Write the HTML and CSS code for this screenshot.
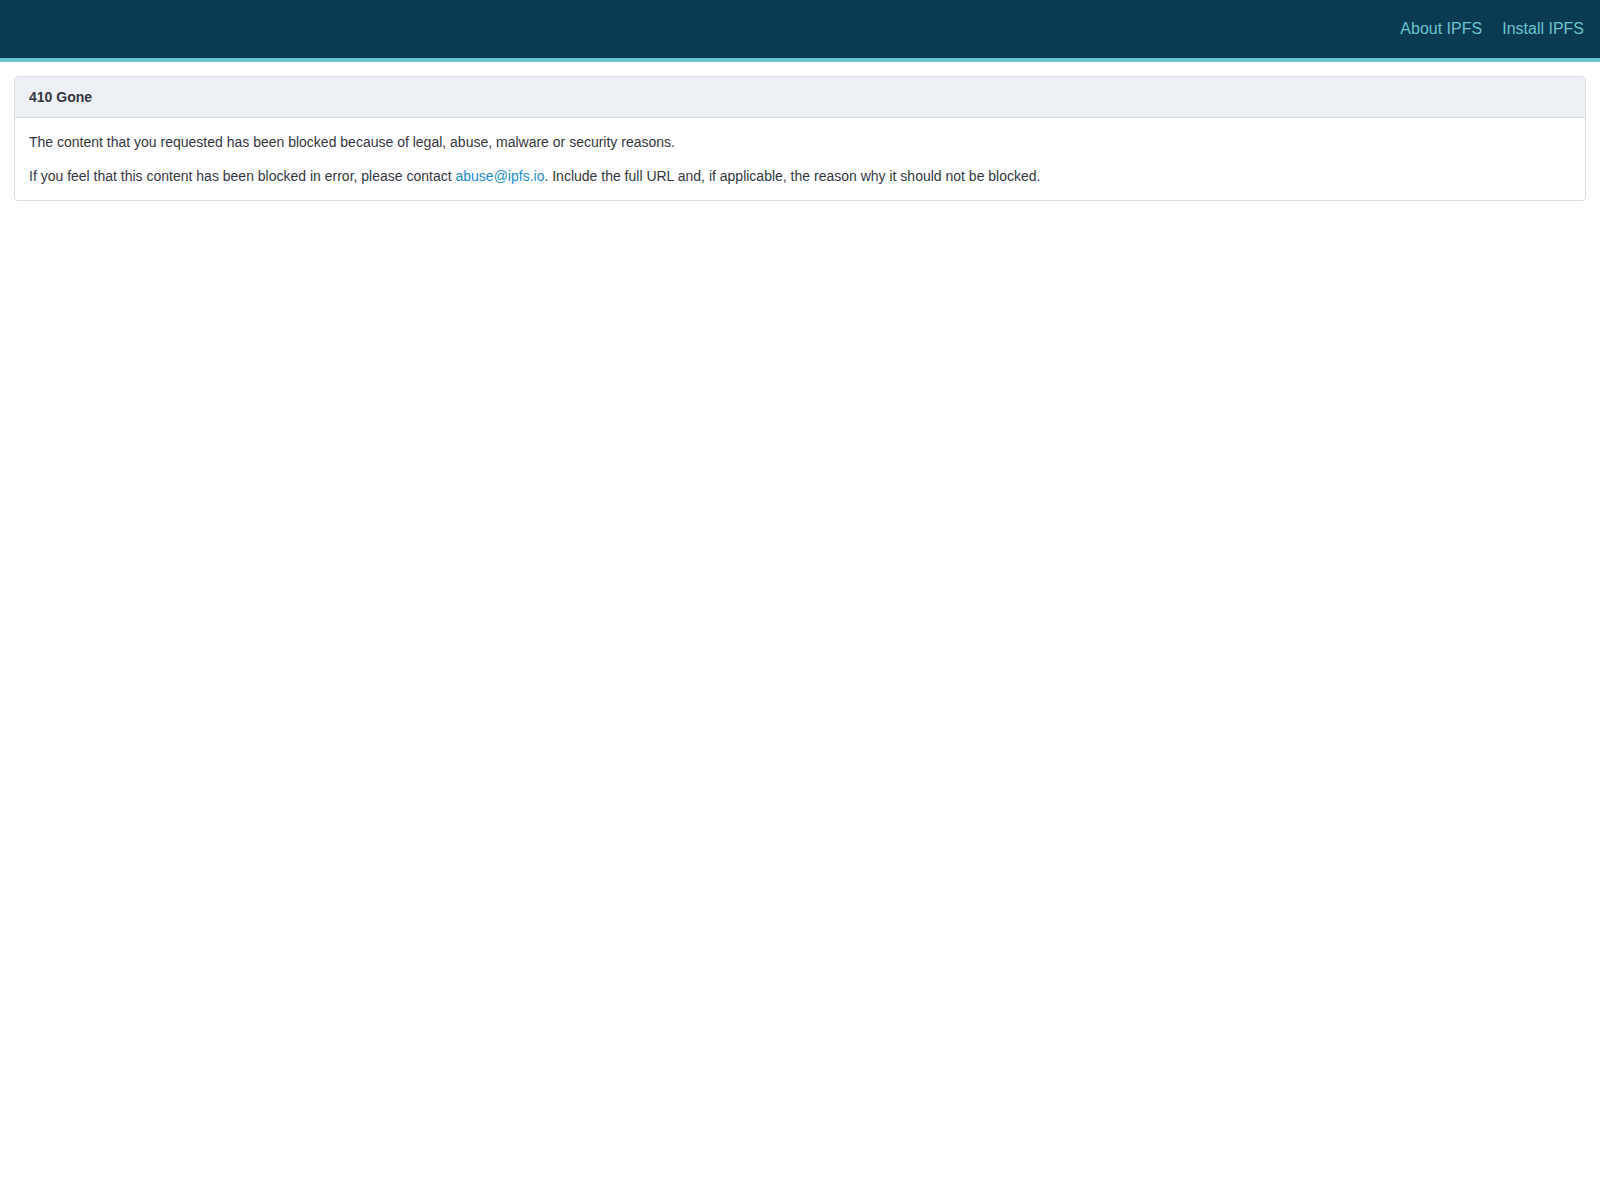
FILE: index.html
```html
<!DOCTYPE html>
<html lang="en">
<head>
  <meta charset="UTF-8">
  <title>410 Gone</title>
  <meta name="viewport" content="width=device-width, initial-scale=1.0" />
  <link rel="stylesheet" href="styles.css">
</head>
<body>
  <!-- top bar -->
  <div class="header">
    <nav class="header-nav">
      <a href="#">About IPFS</a>
      <a href="#">Install IPFS</a>
    </nav>
  </div>

  <!-- message panel -->
  <div class="container">
    <div class="panel">
      <div class="panel-heading">410 Gone</div>
      <div class="panel-body">
        <p>The content that you requested has been blocked because of legal, abuse, malware or security reasons.</p>
        <p>If you feel that this content has been blocked in error, please contact <a href="#">abuse@ipfs.io</a>. Include the full URL and, if applicable, the reason why it should not be blocked.</p>
      </div>
    </div>
  </div>
</body>
</html>
```

FILE: styles.css
```css
:root {
  --navy: #0b3a53;
  --aqua: #69c4cd;
  --text-color: #34373f;
  --link-color: #1b8ec6;
  --border-color: #dcdee4;
  --heading-bg: #edf0f4;
}

body {
  margin: 0;
  font-family: "Liberation Sans", Arial, sans-serif;
  font-size: 14px;
  color: var(--text-color);
  background: #fff;
}

/* top bar */
.header {
  background: var(--navy);
  border-bottom: 4px solid var(--aqua);
  height: 58px;
}

.header-nav {
  display: flex;
  justify-content: flex-end;
  padding: 19px 6px 0 0;
}

.header-nav a {
  color: var(--aqua);
  font-size: 16px;
  line-height: 20px;
  padding: 0 10px;
  text-decoration: none;
}

/* panel */
.container {
  padding: 14px 14px;
}

.panel {
  border: 1px solid var(--border-color);
  border-radius: 4px;
  overflow: hidden;
}

.panel-heading {
  background: var(--heading-bg);
  border-bottom: 1px solid var(--border-color);
  padding: 10px 14px;
  line-height: 20px;
  font-weight: bold;
}

.panel-body {
  padding: 15px 14px 14px;
}

.panel-body p {
  margin: 0 0 15px;
  line-height: 19px;
}

.panel-body p:last-child {
  margin-bottom: 0;
}

.panel-body a {
  color: var(--link-color);
  text-decoration: none;
}
```
